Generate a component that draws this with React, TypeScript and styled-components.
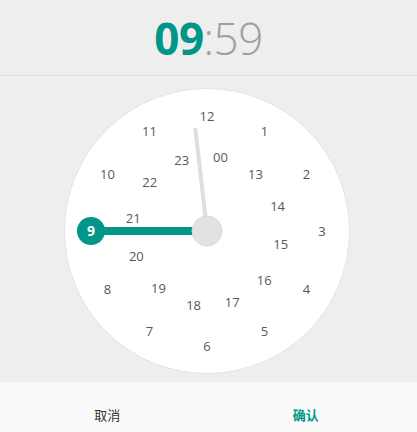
import React from "react";
import styled, { createGlobalStyle } from "styled-components";

const GlobalStyle = createGlobalStyle`
  html, body {
    margin: 0;
    padding: 0;
    background: #eeeeee;
    font-family: "Open Sans", "Noto Sans CJK SC", sans-serif;
  }
`;

const TEAL = "#009688";
const DIAL = 286;
const C = DIAL / 2;
const OUTER_R = 115;
const INNER_R = 75;
const INNER_OFFSET = 10.3;

const Page = styled.div`
  width: 417px;
  height: 432px;
  display: flex;
  flex-direction: column;
  background: #eeeeee;
`;

const Header = styled.div`
  height: 76px;
  box-sizing: border-box;
  border-bottom: 1px solid #dcdcdc;
  box-shadow: 0 1px 0 #f6f6f6;
  display: flex;
  align-items: center;
  justify-content: center;
  padding-top: 1px;
`;

const Time = styled.div`
  font-size: 44px;
  line-height: 1;
  letter-spacing: -0.5px;
`;

const Hours = styled.span`
  color: ${TEAL};
  font-weight: 700;
`;

const Minutes = styled.span`
  color: #9e9e9e;
  font-weight: 300;
`;

const Body = styled.div`
  flex: 1;
  display: flex;
  justify-content: center;
  padding: 12px 3px 0 0;
`;

const Dial = styled.div`
  position: relative;
  width: ${DIAL}px;
  height: ${DIAL}px;
  box-sizing: border-box;
  border-radius: 50%;
  background: #ffffff;
  border: 1px solid #e4e4e4;
`;

const Hands = styled.svg`
  position: absolute;
  left: -1px;
  top: -1px;
`;

const Label = styled.span`
  position: absolute;
  transform: translate(-50%, -50%);
  font-size: 13px;
  line-height: 1;
  color: #585858;
  white-space: nowrap;
`;

const Footer = styled.div`
  height: 50px;
  background: #fafafa;
  display: grid;
  grid-template-columns: 1fr 1fr;
  padding: 0 12px 0 8px;
`;

const Action = styled.button<{ primary?: boolean }>`
  border: none;
  background: transparent;
  font-family: inherit;
  font-size: 13px;
  padding: 14px 0 0;
  color: ${(p) => (p.primary ? TEAL : "#333333")};
  font-weight: ${(p) => (p.primary ? 700 : 400)};
`;

const polar = (deg: number, r: number) => {
  const a = (deg * Math.PI) / 180;
  return { x: C + r * Math.sin(a), y: C - r * Math.cos(a) };
};

const outer = [12, 1, 2, 3, 4, 5, 6, 7, 8, 9, 10, 11];
const inner = ["00", "13", "14", "15", "16", "17", "18", "19", "20", "21", "22", "23"];

export default function App() {
  const knob = polar(270, 116);
  const minuteTip = polar(-6.5, 104);

  return (
    <Page>
      <GlobalStyle />
      <Header>
        <Time>
          <Hours>09</Hours>
          <Minutes>:59</Minutes>
        </Time>
      </Header>
      <Body>
        <Dial>
          {outer.map((h, i) => {
            if (h === 9) return null;
            const p = polar(i * 30, OUTER_R);
            return (
              <Label key={h} style={{ left: p.x - 1, top: p.y - 1 }}>
                {h}
              </Label>
            );
          })}
          {inner.map((h, i) => {
            const p = polar(i * 30 + INNER_OFFSET, INNER_R);
            return (
              <Label key={h} style={{ left: p.x - 1, top: p.y - 1 }}>
                {h}
              </Label>
            );
          })}
          <Hands width={DIAL} height={DIAL}>
            <line
              x1={C}
              y1={C}
              x2={minuteTip.x}
              y2={minuteTip.y}
              stroke="#dedede"
              strokeWidth={4}
            />
            <line x1={C} y1={C} x2={knob.x} y2={knob.y} stroke={TEAL} strokeWidth={8} />
            <circle cx={C} cy={C} r={15} fill="#e2e2e2" stroke="#dadada" strokeWidth={1} />
            <circle cx={knob.x} cy={knob.y} r={14} fill={TEAL} />
            <text
              x={knob.x}
              y={knob.y + 5}
              textAnchor="middle"
              fill="#ffffff"
              fontSize={14}
              fontWeight={700}
              fontFamily="Open Sans, sans-serif"
            >
              9
            </text>
          </Hands>
        </Dial>
      </Body>
      <Footer>
        <Action>取消</Action>
        <Action primary>确认</Action>
      </Footer>
    </Page>
  );
}
